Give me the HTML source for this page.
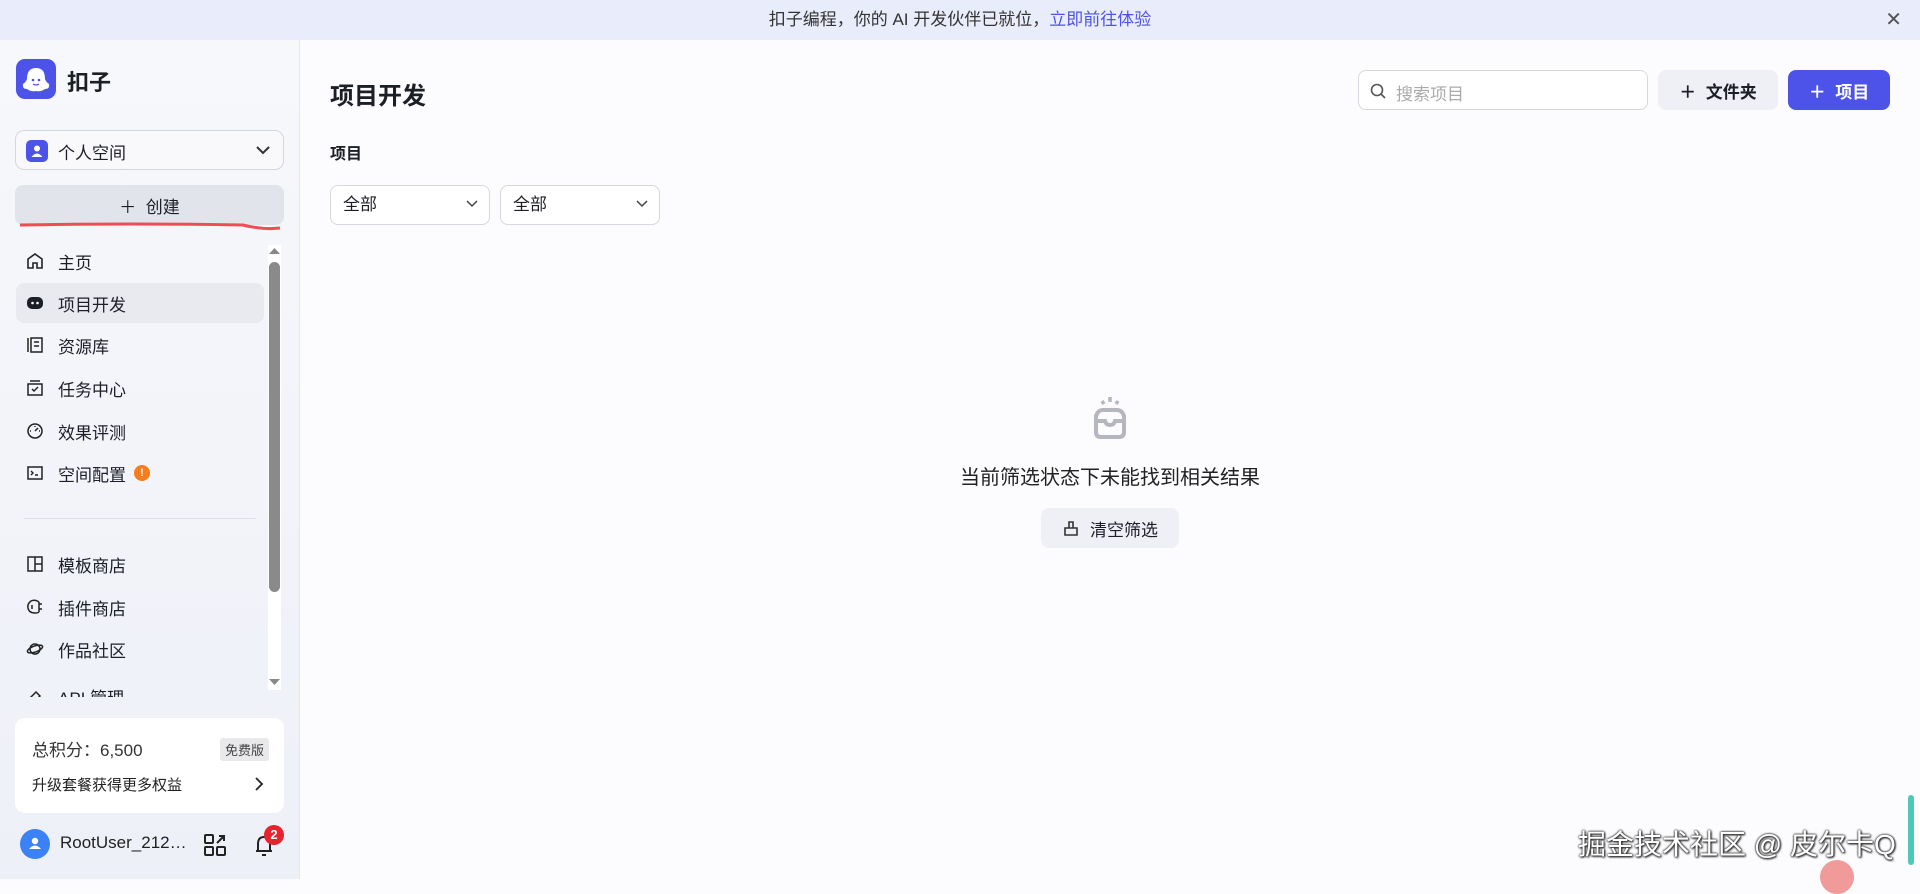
<!DOCTYPE html>
<html><head><meta charset="utf-8"><style>
*{box-sizing:border-box;margin:0;padding:0}
body{width:1920px;height:879px;overflow:hidden;background:#fcfcff;font-family:"Liberation Sans","Noto Sans CJK SC",sans-serif;color:#1d1f27;position:relative}
.banner{position:absolute;left:0;top:0;width:1920px;height:40px;background:#e9ecfa;text-align:center;line-height:40px;font-size:17px;color:#333}
.banner a{color:#4d53e8;text-decoration:none}
.side{position:absolute;left:0;top:40px;width:300px;height:839px;background:linear-gradient(#f7f8fb,#eef0f8);border-right:1px solid #e6e7ec}
.abs{position:absolute}
.item{position:absolute;left:16px;width:248px;height:40px;display:flex;align-items:center;padding-left:10px;font-size:17px;color:#1d1f27}
.item svg{margin-right:14px}
.btn{position:absolute;border-radius:8px;display:flex;align-items:center;justify-content:center;font-size:17px}
.sel{position:absolute;top:185px;height:40px;width:160px;border:1px solid #d5d7de;border-radius:8px;background:#fff;font-size:17px;padding-left:12px;line-height:38px}
.sel svg{position:absolute;right:10px;top:13px}
</style></head><body>
<div class="banner">扣子编程，你的 AI 开发伙伴已就位，<a>立即前往体验</a><span style="position:absolute;right:18px;top:0;font-size:20px;color:#555">✕</span></div>
<div class="side">
 <div class="abs" style="left:16px;top:19px;width:40px;height:40px;border-radius:9px;background:#4d53e8">
  <svg width="40" height="40" viewBox="0 0 40 40"><path d="M11 30 Q6 30 7 25 Q10 23 11 20 Q11 9 20 9 Q29 9 29 20 Q30 23 33 25 Q34 30 29 30 Q25 33 20 32 Q15 33 11 30Z" fill="#fff"/><circle cx="17" cy="21" r="1.3" fill="#4d53e8"/><circle cx="23" cy="21" r="1.3" fill="#4d53e8"/><path d="M17 25 Q20 27 23 25" stroke="#4d53e8" stroke-width="1.3" fill="none"/></svg>
 </div>
 <div class="abs" style="left:67px;top:25px;font-size:22px;font-weight:bold">扣子</div>
 <div class="abs" style="left:15px;top:90px;width:269px;height:40px;border:1px solid #d5d7de;border-radius:9px;background:#f9f9fc">
  <div class="abs" style="left:10px;top:9px;width:22px;height:22px;border-radius:5px;background:#4d53e8"><svg width="22" height="22"><circle cx="11" cy="8.5" r="3" fill="#fff"/><path d="M5.5 17 Q11 10 16.5 17Z" fill="#fff"/></svg></div>
  <div class="abs" style="left:42px;top:8px;font-size:17px">个人空间</div>
  <svg class="abs" style="right:12px;top:14px" width="16" height="10"><path d="M2 2 L8 8 L14 2" stroke="#333" stroke-width="2" fill="none"/></svg>
 </div>
 <div class="btn" style="left:15px;top:145px;width:269px;height:40px;background:#e2e4ec;color:#1d1f27">＋&nbsp;&nbsp;创建</div>
 <svg class="abs" style="left:18px;top:181px" width="264" height="12"><path d="M2 4 Q120 2 225 4 Q245 9 262 7" stroke="#ef4d55" stroke-width="3" fill="none"/></svg>
 <div class="item" style="top:201px"><svg width="18" height="18"><path d="M2 16V7L9 2L16 7V16H11V11H7V16Z" stroke="#222" stroke-width="1.6" fill="none"/></svg>主页</div>
 <div class="item" style="top:243px;background:#e9eaf0;border-radius:8px"><svg width="18" height="18"><rect x="1" y="3" width="16" height="12" rx="5" fill="#1d1f27"/><circle cx="6.5" cy="9" r="1.3" fill="#fff"/><circle cx="11.5" cy="9" r="1.3" fill="#fff"/></svg>项目开发</div>
 <div class="item" style="top:285px"><svg width="18" height="18"><path d="M2 2V16M5 2H16V16H5Z M8 6H13M8 10H13" stroke="#222" stroke-width="1.5" fill="none"/></svg>资源库</div>
 <div class="item" style="top:328px"><svg width="18" height="18"><rect x="2" y="5" width="14" height="11" stroke="#222" stroke-width="1.5" fill="none"/><path d="M4 2H14M6 10L8 12L12 8" stroke="#222" stroke-width="1.5" fill="none"/></svg>任务中心</div>
 <div class="item" style="top:371px"><svg width="18" height="18"><circle cx="9" cy="9" r="7" stroke="#222" stroke-width="1.5" fill="none"/><path d="M9 9L12 6M4 9H5M13 9H14M9 4V5" stroke="#222" stroke-width="1.5"/></svg>效果评测</div>
 <div class="item" style="top:413px"><svg width="18" height="18"><rect x="2" y="3" width="14" height="12" stroke="#222" stroke-width="1.5" fill="none"/><path d="M5 7L7 9L5 11M9 11H12" stroke="#222" stroke-width="1.4" fill="none"/></svg>空间配置<span style="display:inline-block;width:16px;height:16px;border-radius:50%;background:#f77c1a;color:#fff;font-size:11px;text-align:center;line-height:16px;margin-left:8px;font-weight:bold">!</span></div>
 <div class="abs" style="left:24px;top:478px;width:232px;height:1px;background:#dfe1e8"></div>
 <div class="item" style="top:504px"><svg width="18" height="18"><rect x="2" y="2" width="14" height="14" stroke="#222" stroke-width="1.5" fill="none"/><path d="M9 2V16M9 9H16" stroke="#222" stroke-width="1.5"/></svg>模板商店</div>
 <div class="item" style="top:547px"><svg width="18" height="18"><path d="M13 4Q9 1 5 3Q1 6 2 10Q3 15 9 15Q12 15 13 14M13 6H16M13 11H16M13 4V14M6 7V11" stroke="#222" stroke-width="1.5" fill="none"/></svg>插件商店</div>
 <div class="item" style="top:589px"><svg width="18" height="18"><circle cx="9" cy="9" r="5" stroke="#222" stroke-width="1.5" fill="none"/><ellipse cx="9" cy="9" rx="8" ry="3" transform="rotate(-20 9 9)" stroke="#222" stroke-width="1.5" fill="none"/></svg>作品社区</div>
 <div class="abs" style="left:16px;top:638px;width:248px;height:19px;overflow:hidden"><div style="position:absolute;left:10px;top:6px;font-size:17px;display:flex;align-items:center"><svg width="18" height="18" style="margin-right:14px"><path d="M2 16L8 10M10 4L14 8L9 13L5 9Z" stroke="#222" stroke-width="1.5" fill="none"/></svg>API 管理</div></div>
 <div class="abs" style="left:268px;top:205px;width:13px;height:445px;background:#fff"></div>
 <svg class="abs" style="left:268px;top:207px" width="13" height="8"><path d="M1 7L6.5 1L12 7Z" fill="#888"/></svg>
 <div class="abs" style="left:269px;top:222px;width:11px;height:330px;border-radius:6px;background:#8a8a8a"></div>
 <svg class="abs" style="left:268px;top:638px" width="13" height="8"><path d="M1 1L6.5 7L12 1Z" fill="#888"/></svg>
 <div class="abs" style="left:15px;top:678px;width:269px;height:95px;background:#fff;border-radius:10px">
  <div class="abs" style="left:17px;top:18px;font-size:17px;color:#333">总积分：6,500</div>
  <div class="abs" style="right:15px;top:20px;font-size:13px;background:#e9e9ec;border-radius:3px;padding:2px 5px;color:#444">免费版</div>
  <div class="abs" style="left:17px;top:56px;font-size:15px;color:#222">升级套餐获得更多权益</div>
  <svg class="abs" style="right:20px;top:58px" width="10" height="16"><path d="M2 2L8 8L2 14" stroke="#222" stroke-width="1.8" fill="none"/></svg>
 </div>
 <div class="abs" style="left:20px;top:789px;width:30px;height:30px;border-radius:50%;background:#3b82f6"><svg width="30" height="30"><circle cx="15" cy="12" r="3.2" fill="#fff"/><path d="M9 20Q15 13 21 20Z" fill="#fff"/></svg></div>
 <div class="abs" style="left:60px;top:793px;font-size:17px;color:#222">RootUser_212…</div>
 <svg class="abs" style="left:203px;top:793px" width="24" height="24"><g stroke="#222" stroke-width="2" fill="none"><rect x="2" y="2" width="8" height="8" rx="1"/><rect x="2" y="14" width="8" height="8" rx="1"/><rect x="14" y="14" width="8" height="8" rx="1"/><path d="M14 10L21 3M16 3H21V8"/></g></svg>
 <svg class="abs" style="left:252px;top:792px" width="24" height="26"><path d="M4 19H20M6 19V12Q6 5 12 5Q18 5 18 12V19M10 23H14" stroke="#222" stroke-width="2" fill="none"/></svg>
 <div class="abs" style="left:264px;top:785px;width:20px;height:20px;border-radius:50%;background:#e5242f;color:#fff;font-size:13px;font-weight:bold;text-align:center;line-height:20px">2</div>
</div>
<div class="abs" style="left:330px;top:76px;font-size:24px;font-weight:bold">项目开发</div>
<div class="abs" style="left:1358px;top:70px;width:290px;height:40px;border:1px solid #d5d7de;border-radius:8px;background:#fff">
 <svg class="abs" style="left:10px;top:11px" width="18" height="18"><circle cx="8" cy="8" r="5.5" stroke="#555" stroke-width="1.6" fill="none"/><path d="M12 12L16 16" stroke="#555" stroke-width="1.6"/></svg>
 <div class="abs" style="left:37px;top:9px;font-size:17px;color:#aaa">搜索项目</div>
</div>
<div class="btn" style="left:1658px;top:70px;width:120px;height:40px;background:#eff0f5;font-weight:bold">＋&nbsp;&nbsp;文件夹</div>
<div class="btn" style="left:1788px;top:70px;width:102px;height:40px;background:#4d53e8;color:#fff;font-weight:bold">＋&nbsp;&nbsp;项目</div>
<div class="abs" style="left:330px;top:140px;font-size:16px;font-weight:bold">项目</div>
<div class="sel" style="left:330px">全部<svg width="14" height="10"><path d="M2 2L7 7L12 2" stroke="#444" stroke-width="1.5" fill="none"/></svg></div>
<div class="sel" style="left:500px">全部<svg width="14" height="10"><path d="M2 2L7 7L12 2" stroke="#444" stroke-width="1.5" fill="none"/></svg></div>
<svg class="abs" style="left:1084px;top:393px" width="52" height="52"><g stroke="#b5b6bf" stroke-width="4" fill="none" stroke-linecap="round"><path d="M12 23Q14 17 19 17H33Q38 17 40 23V39Q40 44 35 44H17Q12 44 12 39Z"/><path d="M12 28H21Q22 32 26 32Q30 32 31 28H40"/></g><path d="M26 4V9M18 8L20 11M34 8L32 11" stroke="#b5b6bf" stroke-width="3.5"/></svg>
<div class="abs" style="left:940px;top:461px;width:340px;text-align:center;font-size:20px;color:#222">当前筛选状态下未能找到相关结果</div>
<div class="btn" style="left:1041px;top:508px;width:138px;height:40px;background:#eff0f5;font-size:17px"><svg width="18" height="18" style="margin-right:10px"><path d="M3 16V9H15V16ZM7 9V3H11V9" stroke="#333" stroke-width="1.6" fill="none"/></svg>清空筛选</div>
<div class="abs" style="left:1578px;top:823px;font-size:28px;color:#fff;white-space:nowrap;text-shadow:0 0 2px #333,0 0 2px #333,1px 1px 2px #000">掘金技术社区 @ 皮尔卡Q</div>
<div class="abs" style="left:1820px;top:860px;width:34px;height:34px;border-radius:50%;background:#f19a9a"></div>
<div class="abs" style="left:1908px;top:795px;width:6px;height:70px;background:#4cc9b8;border-radius:3px"></div>
</body></html>
